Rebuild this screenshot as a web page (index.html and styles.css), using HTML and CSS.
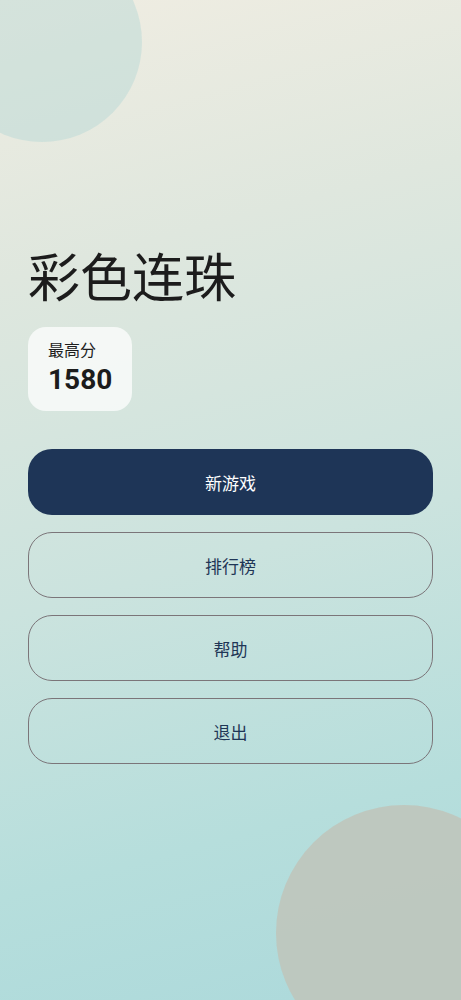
FILE: index.html
```html
<!DOCTYPE html>
<html lang="zh-CN">
<head>
    <meta charset="UTF-8">
    <meta name="viewport" content="width=device-width, initial-scale=1.0">
    <title>彩色连珠</title>
    <link rel="stylesheet" href="styles.css">
</head>
<body>
    <div class="screen">
        <div class="blob blob-top"></div>
        <div class="blob blob-bottom"></div>

        <div class="content">
            <h1 class="title">彩色连珠</h1>

            <div class="best-score">
                <span class="label">最高分</span>
                <strong class="value">1580</strong>
            </div>

            <div class="menu">
                <button class="menu-btn primary">新游戏</button>
                <button class="menu-btn">排行榜</button>
                <button class="menu-btn">帮助</button>
                <button class="menu-btn">退出</button>
            </div>
        </div>
    </div>
</body>
</html>
```

FILE: styles.css
```css
* {
    margin: 0;
    padding: 0;
    box-sizing: border-box;
}

body {
    font-family: Roboto, "Noto Sans CJK SC", sans-serif;
    background: #b0dcdc;
}

.screen {
    position: relative;
    width: 100%;
    height: 1000px;
    overflow: hidden;
    background: linear-gradient(165deg, #f0ede2 0%, #dfe7de 25%, #cbe3de 55%, #b6dedc 80%, #acd9db 100%);
}

.blob {
    position: absolute;
    border-radius: 50%;
}

.blob-top {
    width: 200px;
    height: 200px;
    left: -58px;
    top: -58px;
    background: rgba(180, 215, 212, 0.45);
}

.blob-bottom {
    width: 256px;
    height: 256px;
    left: 276px;
    top: 805px;
    background: rgba(192, 196, 186, 0.85);
}

.content {
    position: relative;
    padding: 237px 28px 0;
}

.title {
    font-family: "Noto Sans CJK SC", sans-serif;
    font-size: 52px;
    font-weight: 400;
    line-height: 76px;
    color: #1c1c1c;
}

.best-score {
    display: inline-flex;
    flex-direction: column;
    margin-top: 14px;
    padding: 12px 20px 14px;
    border-radius: 18px;
    background: rgba(255, 255, 255, 0.72);
}

.best-score .label {
    font-size: 16px;
    line-height: 24px;
    color: #1e1e1e;
}

.best-score .value {
    font-size: 28px;
    font-weight: 700;
    line-height: 34px;
    color: #1c1c1c;
}

.menu {
    display: flex;
    flex-direction: column;
    gap: 17px;
    margin-top: 38px;
}

.menu-btn {
    height: 66px;
    border: 1.5px solid #7b7579;
    border-radius: 24px;
    background: transparent;
    font-family: "Noto Sans CJK SC", sans-serif;
    font-size: 17px;
    color: #1f3656;
    cursor: pointer;
}

.menu-btn.primary {
    border: none;
    background: #1e3557;
    color: #fff;
}
```
